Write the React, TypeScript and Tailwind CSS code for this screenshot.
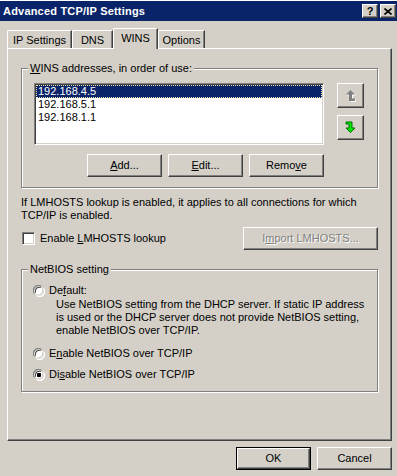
import React from "react";

const raised =
  "border border-t-white border-l-white border-r-[#404040] border-b-[#404040] shadow-[inset_-1px_-1px_0_#808080]";
const sunken =
  "border border-t-[#808080] border-l-[#808080] border-r-white border-b-white shadow-[inset_1px_1px_0_#404040,inset_-1px_-1px_0_#d4d0c8]";

function Btn({
  children,
  w = "w-[75px]",
  disabled = false,
  def = false,
}: {
  children: React.ReactNode;
  w?: string;
  disabled?: boolean;
  def?: boolean;
}) {
  const inner = (
    <div
      className={`${raised} h-full w-full flex items-center justify-center bg-[#d4d0c8] ${
        disabled ? "text-[#808080] [text-shadow:1px_1px_0_#fff]" : "text-black"
      }`}
    >
      {children}
    </div>
  );
  if (def)
    return <div className={`${w} h-[23px] border border-black`}>{inner}</div>;
  return <div className={`${w} h-[23px]`}>{inner}</div>;
}

function Group({
  label,
  children,
  className = "",
}: {
  label: string;
  children: React.ReactNode;
  className?: string;
}) {
  return (
    <div
      className={`relative w-[357px] border border-[#808080] shadow-[inset_1px_1px_0_#fff,1px_1px_0_#fff] ${className}`}
    >
      <span className="absolute -top-[7px] left-[6px] bg-[#d4d0c8] px-[2px] leading-[13px] whitespace-nowrap">
        {label === "WINS" ? (
          <>
            <u>W</u>INS addresses, in order of use:
          </>
        ) : (
          label
        )}
      </span>
      {children}
    </div>
  );
}

function Radio({ checked = false }: { checked?: boolean }) {
  return (
    <svg width="12" height="12" viewBox="0 0 12 12" className="shrink-0">
      <path d="M1.5 8.5 A5 5 0 0 1 8.5 1.5" fill="none" stroke="#808080" strokeWidth="1.2" />
      <path d="M10.5 3.5 A5 5 0 0 1 3.5 10.5" fill="none" stroke="#ffffff" strokeWidth="1.2" />
      <circle cx="6" cy="6" r="4.4" fill="#fff" />
      <path d="M2.6 7.8 A4 4 0 0 1 7.8 2.6" fill="none" stroke="#404040" strokeWidth="1.1" />
      <path d="M9.4 4.2 A4 4 0 0 1 4.2 9.4" fill="none" stroke="#d4d0c8" strokeWidth="1.1" />
      {checked && <rect x="4" y="4" width="4" height="4" rx="1" fill="#000" />}
    </svg>
  );
}

function UpArrow() {
  return (
    <svg width="11" height="13" viewBox="0 0 11 13">
      <polygon
        points="5.5,1 10,5.5 7,5.5 7,9.5 10,9.5 10,12 5,12 5,5.5 1,5.5"
        fill="#ffffff"
        transform="translate(1,1)"
      />
      <polygon points="5.5,1 10,5.5 7,5.5 7,9.5 10,9.5 10,12 4,12 4,5.5 1,5.5" fill="#808080" />
    </svg>
  );
}

function DownArrow() {
  return (
    <svg width="11" height="13" viewBox="0 0 11 13">
      <polygon
        points="1,1 7,1 7,7 10,7 5.5,11.5 1,7 4,7 4,3 1,3"
        fill="#00e800"
        stroke="#007000"
        strokeWidth="1"
        strokeLinejoin="miter"
      />
    </svg>
  );
}

export default function App() {
  return (
    <div className="w-[397px] h-[476px] bg-[#d4d0c8] font-['Liberation_Sans',Arial,sans-serif] text-[11px] leading-[13px] text-black flex flex-col overflow-hidden">
      {/* Title bar */}
      <div className="h-[21px] border-t border-white bg-[#0a246a] flex items-center pl-[3px] pr-[1px]">
        <span className="font-bold text-white text-[11px] tracking-[0.2px]">Advanced TCP/IP Settings</span>
        <div className="ml-auto flex gap-[2px]">
          <div className={`${raised} w-[16px] h-[14px] bg-[#d4d0c8] flex items-center justify-center font-bold text-[11px] leading-none`}>
            ?
          </div>
          <div className={`${raised} w-[16px] h-[14px] bg-[#d4d0c8] flex items-center justify-center`}>
            <svg width="8" height="7" viewBox="0 0 8 7">
              <path d="M0.5 0.5 L7.5 6.5 M7.5 0.5 L0.5 6.5" stroke="#000" strokeWidth="1.6" />
            </svg>
          </div>
        </div>
      </div>

      {/* Tabs */}
      <div className="h-[27px] flex items-end pl-[7px]">
        <div className="w-[65px] h-[18px] border-l border-t border-white rounded-tl-[2px] border-r border-r-[#404040] shadow-[inset_-1px_0_0_#808080] flex items-center justify-center pt-[2px]">
          IP Settings
        </div>
        <div className="w-[41px] h-[18px] border-l border-t border-white rounded-tl-[2px] border-r border-r-[#404040] shadow-[inset_-1px_0_0_#808080] flex items-center justify-center pt-[2px]">
          DNS
        </div>
        <div className="relative z-10 w-[45px] h-[21px] -mb-[1px] bg-[#d4d0c8] border-l border-t border-white rounded-tl-[2px] border-r border-r-[#404040] shadow-[inset_-1px_0_0_#808080] flex items-center justify-center pb-[1px]">
          WINS
        </div>
        <div className="w-[47px] h-[18px] border-l border-t border-white rounded-tl-[2px] border-r border-r-[#404040] shadow-[inset_-1px_0_0_#808080] flex items-center justify-center pt-[2px]">
          Options
        </div>
      </div>

      {/* Panel */}
      <div className="ml-[7px] w-[385px] h-[393px] border border-t-white border-l-white border-r-[#404040] border-b-[#404040] shadow-[inset_-1px_-1px_0_#808080] flex flex-col pl-[13px]">
        <Group label="WINS" className="mt-[19px] pt-[14px] pl-[12px] pb-[10px]">
          <div className="flex gap-[13px]">
            <div className="w-[290px] flex flex-col">
              <div className={`${sunken} h-[62px] bg-white p-[1px]`}>
                <div className="h-[13px] bg-[#0a246a] text-white border border-dotted border-[#f0e8a8] flex items-center pl-[1px]">
                  192.168.4.5
                </div>
                <div className="h-[13px] flex items-center pl-[2px]">192.168.5.1</div>
                <div className="h-[13px] flex items-center pl-[2px]">192.168.1.1</div>
              </div>
              <div className="mt-[9px] flex justify-end gap-[6px]">
                <Btn>
                  <u>A</u>dd...
                </Btn>
                <Btn>
                  <u>E</u>dit...
                </Btn>
                <Btn>
                  Remo<u>v</u>e
                </Btn>
              </div>
            </div>
            <div className="flex flex-col gap-[7px]">
              <div className={`${raised} w-[27px] h-[25px] flex items-center justify-center`}>
                <UpArrow />
              </div>
              <div className={`${raised} w-[27px] h-[25px] flex items-center justify-center`}>
                <DownArrow />
              </div>
            </div>
          </div>
        </Group>

        <p className="mt-[8px] whitespace-nowrap">
          If LMHOSTS lookup is enabled, it applies to all connections for which
          <br />
          TCP/IP is enabled.
        </p>

        <div className="mt-[5px] w-[357px] flex items-center justify-between">
          <div className="flex items-center gap-[5px] ml-[1px]">
            <div className={`${sunken} w-[13px] h-[13px] bg-white`} />
            <span>
              Enable <u>L</u>MHOSTS lookup
            </span>
          </div>
          <Btn w="w-[135px]" disabled>
            <span>
              I<u>m</u>port LMHOSTS...
            </span>
          </Btn>
        </div>

        <Group label="NetBIOS setting" className="mt-[19px] pt-[14px] pl-[11px] pb-[10px]">
          <div className="h-[13px] flex items-center gap-[4px]">
            <Radio />
            <span>
              De<u>f</u>ault:
            </span>
          </div>
          <p className="ml-[23px] mt-[1px] whitespace-nowrap">
            Use NetBIOS setting from the DHCP server. If static IP address
            <br />
            is used or the DHCP server does not provide NetBIOS setting,
            <br />
            enable NetBIOS over TCP/IP.
          </p>
          <div className="mt-[10px] h-[13px] flex items-center gap-[4px]">
            <Radio />
            <span>
              E<u>n</u>able NetBIOS over TCP/IP
            </span>
          </div>
          <div className="mt-[8px] h-[13px] flex items-center gap-[4px]">
            <Radio checked />
            <span>
              Di<u>s</u>able NetBIOS over TCP/IP
            </span>
          </div>
        </Group>
      </div>

      {/* Bottom buttons */}
      <div className="mt-[6px] flex justify-end gap-[6px] pr-[5px]">
        <Btn def>OK</Btn>
        <Btn>Cancel</Btn>
      </div>
    </div>
  );
}
